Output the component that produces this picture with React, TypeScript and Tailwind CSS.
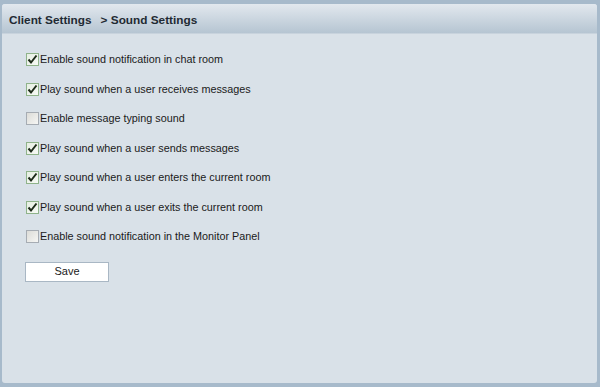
import React from "react";

const items: [string, boolean][] = [
  ["Enable sound notification in chat room", true],
  ["Play sound when a user receives messages", true],
  ["Enable message typing sound", false],
  ["Play sound when a user sends messages", true],
  ["Play sound when a user enters the current room", true],
  ["Play sound when a user exits the current room", true],
  ["Enable sound notification in the Monitor Panel", false],
];

function Box({ checked }: { checked: boolean }) {
  return checked ? (
    <div className="w-[13px] h-[13px] border border-[#8fb38a] bg-gradient-to-br from-[#e6eee2] to-[#f7f9f5] flex items-center justify-center shrink-0">
      <svg width="11" height="11" viewBox="0 0 11 11">
        <path d="M1.5 5.5 L4 8.5 L9.5 1.5" stroke="#1d2a1a" strokeWidth="2" fill="none" />
      </svg>
    </div>
  ) : (
    <div className="w-[13px] h-[13px] border border-[#a6acb3] bg-gradient-to-br from-[#dcdcd8] to-[#f6f6f4] shrink-0" />
  );
}

export default function App() {
  return (
    <div className="w-[600px] h-[387px] bg-[#a7bacb] pt-[4px] pl-[2px] pr-[3px] pb-[4px]" style={{ fontFamily: "'Liberation Sans', Arial, sans-serif" }}>
      <div className="w-full h-full flex flex-col bg-[#d9e1e8] rounded-[3px] overflow-hidden">
        <div className="h-[30px] shrink-0 bg-gradient-to-b from-[#e2e8ee] to-[#b6c5d2] border-b border-[#c8d3dd] flex items-center pl-[7px] pt-[5px] text-[11.8px] font-bold text-[#1f2a33]">
          <span>Client Settings</span>
          <span className="ml-[9px]">&gt; Sound Settings</span>
        </div>
        <div className="pl-[24px] pt-[19px] flex flex-col">
          {items.map(([label, c]) => (
            <div key={label} className="h-[29.5px] flex items-start">
              <div className="flex items-center gap-[1px] text-[10.8px] text-[#1a1a1a]">
                <Box checked={c} />
                <span className="leading-[13px]">{label}</span>
              </div>
            </div>
          ))}
          <button className="mt-[2px] -ml-[1px] w-[84px] h-[20px] bg-white border border-[#a9b7c4] text-[11px] text-[#1a1a1a]">
            Save
          </button>
        </div>
      </div>
    </div>
  );
}
